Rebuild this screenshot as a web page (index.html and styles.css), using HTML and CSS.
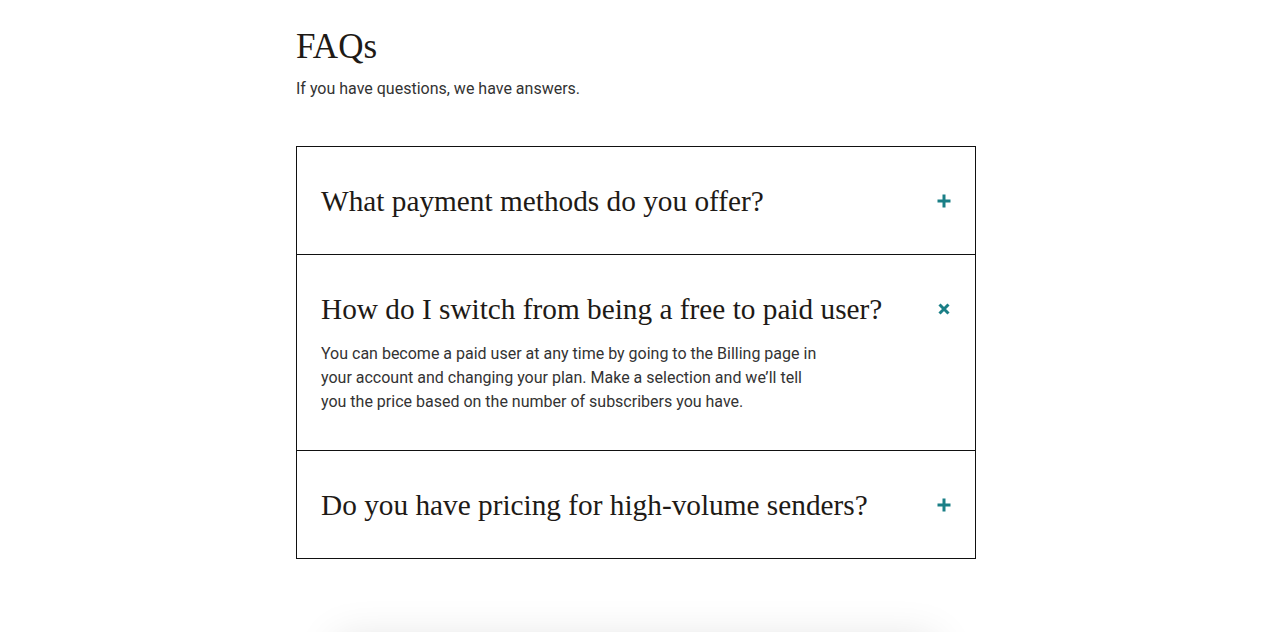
FILE: index.html
```html
<!DOCTYPE html>
<html lang="en">
<head>
<meta charset="utf-8">
<title>FAQs</title>
<link rel="stylesheet" href="styles.css">
</head>
<body>
<main class="page">
  <section class="faq">
    <h1 class="faq-title">FAQs</h1>
    <p class="faq-sub">If you have questions, we have answers.</p>
    <div class="accordion">
      <div class="item">
        <div class="item-head">
          <h2 class="question">What payment methods do you offer?</h2>
          <svg class="icon" width="14" height="14" viewBox="0 0 14 14"><path d="M7 0.5V13.5M0.5 7H13.5" stroke="#1a7f86" stroke-width="3"/></svg>
        </div>
      </div>
      <div class="item open">
        <div class="item-head">
          <h2 class="question">How do I switch from being a free to paid user?</h2>
          <svg class="icon" width="14" height="14" viewBox="0 0 14 14"><path d="M2.5 2.5L11.5 11.5M11.5 2.5L2.5 11.5" stroke="#1a7f86" stroke-width="3"/></svg>
        </div>
        <p class="answer">You can become a paid user at any time by going to the Billing page in your account and changing your plan. Make a selection and we’ll tell you the price based on the number of subscribers you have.</p>
      </div>
      <div class="item">
        <div class="item-head">
          <h2 class="question">Do you have pricing for high-volume senders?</h2>
          <svg class="icon" width="14" height="14" viewBox="0 0 14 14"><path d="M7 0.5V13.5M0.5 7H13.5" stroke="#1a7f86" stroke-width="3"/></svg>
        </div>
      </div>
    </div>
  </section>
  <div class="next-card"></div>
</main>
</body>
</html>
```

FILE: styles.css
```css
* { box-sizing: border-box; }
html, body { margin: 0; padding: 0; background: #fff; }
body { font-family: Roboto, "Liberation Sans", sans-serif; color: #2b2b2b; overflow: hidden; }
.page {
  display: flex;
  flex-direction: column;
  align-items: center;
  padding-right: 4px;
}
.faq { width: 680px; padding-top: 25px; }
.faq-title {
  font-family: "Liberation Serif", Georgia, serif;
  font-weight: 400;
  font-size: 35px;
  line-height: 44px;
  margin: 0;
  color: #1e1a16;
}
.faq-sub {
  margin: 10px 0 0;
  font-size: 16px;
  line-height: 20px;
  color: #333;
}
.accordion {
  margin-top: 47px;
  border: 1px solid #111;
}
.item { padding: 36px 24px 35px 24px; }
.item + .item { border-top: 1px solid #111; }
.item-head {
  display: flex;
  align-items: center;
  justify-content: space-between;
}
.question {
  margin: 0;
  font-family: "Liberation Serif", Georgia, serif;
  font-weight: 400;
  font-size: 29.3px;
  line-height: 36px;
  color: #1e1a16;
}
.icon { display: block; flex: none; }
.answer {
  margin: 15px 0 1px;
  max-width: 505px;
  font-size: 16px;
  line-height: 24px;
  color: #333;
}
.next-card {
  width: 600px;
  height: 200px;
  margin-top: 80px;
  background: #fff;
  box-shadow: 0 0 40px rgba(0,0,0,0.12);
}
```
